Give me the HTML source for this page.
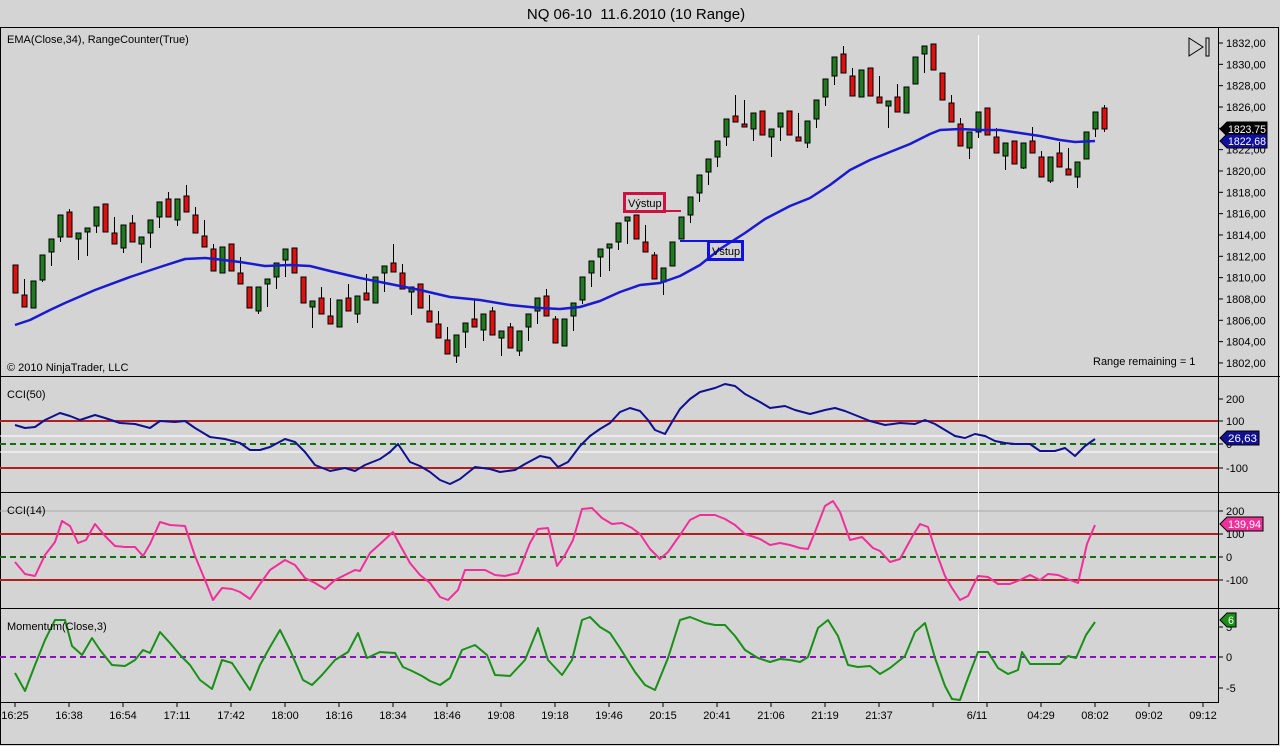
<!DOCTYPE html>
<html><head><meta charset="utf-8"><style>
body{margin:0;background:#d4d4d4;width:1280px;height:746px;overflow:hidden;font-family:"Liberation Sans",Arial,sans-serif}
svg{display:block}
</style></head><body>
<svg id="s" width="1280" height="746" xmlns="http://www.w3.org/2000/svg" font-family="Liberation Sans, Arial, sans-serif">
<rect width="1280" height="746" fill="#d4d4d4"/>
<text x="636" y="19" font-size="15" text-anchor="middle" fill="#000" style="white-space:pre">NQ 06-10&#160; 11.6.2010 (10 Range)</text>
<rect x="0.5" y="27.5" width="1278" height="717" fill="none" stroke="#000"/>
<line x1="0" y1="376.5" x2="1280" y2="376.5" stroke="#000"/>
<line x1="0" y1="492.5" x2="1280" y2="492.5" stroke="#000"/>
<line x1="0" y1="608.5" x2="1280" y2="608.5" stroke="#000"/>
<line x1="1218.5" y1="27" x2="1218.5" y2="702" stroke="#000"/>
<line x1="0" y1="702.5" x2="1219" y2="702.5" stroke="#000"/>
<line x1="978.5" y1="35" x2="978.5" y2="702" stroke="#fff"/>
<g id="g"></g>
<text x="7" y="43" font-size="11">EMA(Close,34), RangeCounter(True)</text>
<text x="7" y="371" font-size="11">© 2010 NinjaTrader, LLC</text>
<text x="1093" y="365" font-size="11">Range remaining = 1</text>
<text x="7" y="398" font-size="11">CCI(50)</text>
<text x="7" y="514" font-size="11">CCI(14)</text>
<text x="7" y="630" font-size="11">Momentum(Close,3)</text>
<path d="M1189 38 L1203 47 L1189 56 Z" fill="none" stroke="#000"/>
<rect x="1206" y="38" width="3" height="18" fill="none" stroke="#000"/>
</svg>
<script>
const g=document.getElementById('g');let h='';
h+='<line x1="0" y1="421" x2="1218" y2="421" stroke="#b02020" stroke-width="2"/><line x1="0" y1="468" x2="1218" y2="468" stroke="#b02020" stroke-width="2"/>';
h+='<line x1="0" y1="436" x2="1218" y2="436" stroke="#fff"/><line x1="0" y1="452" x2="1218" y2="452" stroke="#fff"/>';
h+='<line x1="0" y1="444" x2="1218" y2="444" stroke="#107010" stroke-width="2" stroke-dasharray="6,4"/>';
h+='<line x1="0" y1="511" x2="1218" y2="511" stroke="#a8a8a8"/>';
h+='<line x1="0" y1="534" x2="1218" y2="534" stroke="#b02020" stroke-width="2"/><line x1="0" y1="580" x2="1218" y2="580" stroke="#b02020" stroke-width="2"/>';
h+='<line x1="0" y1="557" x2="1218" y2="557" stroke="#107010" stroke-width="2" stroke-dasharray="6,4"/>';
h+='<line x1="0" y1="657" x2="1218" y2="657" stroke="#8a10c0" stroke-width="2" stroke-dasharray="6,4"/>';
for(let i=0;i<16;i++){const p=1832-2*i,y=43+i*21.33;h+=`<line x1="1218" y1="${y}" x2="1223" y2="${y}" stroke="#000"/><text x="1226" y="${y+4}" font-size="11">${p},00</text>`;}
[[399,'200'],[421,'100'],[444,'0'],[468,'-100'],[511,'200'],[534,'100'],[557,'0'],[580,'-100'],[627,'5'],[657,'0'],[688,'-5']].forEach(([y,t])=>{h+=`<line x1="1218" y1="${y}" x2="1223" y2="${y}" stroke="#000"/><text x="1226" y="${y+4}" font-size="11">${t}</text>`;});
const tl=['16:25','16:38','16:54','17:11','17:42','18:00','18:16','18:34','18:46','19:08','19:18','19:46','20:15','20:41','21:06','21:19','21:37','','6/11','04:29','08:02','09:02','09:12'];
tl.forEach((t,i)=>{const x=15+54*i;h+=`<line x1="${x}" y1="702" x2="${x}" y2="707" stroke="#000"/>`;if(t)h+=`<text x="${i==18?977:x}" y="719" font-size="11" text-anchor="middle">${t}</text>`;});
const C=[[265,293,265,293,'r'],[295,307,279,307,'r'],[281,308,281,308,'g'],[255,280,255,282,'g'],[239,252,239,266,'g'],[215,237,215,242,'g'],[212,237,209,237,'r'],[233,239,233,260,'g'],[228,232,228,256,'g'],[207,226,207,233,'g'],[204,232,204,232,'r'],[233,244,217,244,'r'],[225,248,225,253,'g'],[223,242,215,242,'r'],[237,244,237,263,'g'],[220,233,220,248,'g'],[202,217,202,228,'g'],[199,217,192,217,'r'],[199,220,199,226,'g'],[196,212,185,212,'r'],[215,233,207,233,'r'],[236,247,220,247,'r'],[249,271,244,271,'r'],[247,273,247,273,'g'],[244,271,244,271,'r'],[273,284,257,284,'r'],[287,308,287,308,'r'],[287,311,287,314,'g'],[279,284,279,307,'g'],[263,277,263,289,'g'],[249,260,249,277,'g'],[248,273,248,273,'r'],[277,303,277,303,'r'],[301,307,301,328,'g'],[298,314,287,314,'r'],[316,324,298,324,'r'],[300,327,300,327,'g'],[298,311,284,311,'r'],[296,314,296,323,'g'],[293,300,274,300,'r'],[277,303,277,303,'g'],[266,273,266,292,'g'],[263,272,244,272,'r'],[273,289,264,289,'r'],[287,292,287,315,'g'],[284,308,284,308,'r'],[311,322,295,322,'r'],[324,338,311,338,'r'],[340,354,327,354,'r'],[335,356,335,363,'g'],[323,332,323,348,'g'],[319,327,300,327,'r'],[314,330,314,341,'g'],[311,335,307,335,'r'],[331,338,331,356,'g'],[327,348,323,348,'r'],[331,351,331,356,'g'],[314,327,314,341,'g'],[298,311,298,324,'g'],[296,316,289,316,'r'],[319,343,316,343,'r'],[319,346,319,346,'g'],[303,316,303,331,'g'],[277,300,277,304,'g'],[261,273,261,287,'g'],[249,257,249,277,'g'],[244,248,244,271,'g'],[223,242,223,250,'g'],[217,221,217,244,'g'],[215,239,215,239,'r'],[242,252,225,252,'r'],[255,279,252,279,'r'],[268,282,268,295,'g'],[242,266,242,266,'g'],[217,239,217,239,'g'],[197,215,197,223,'g'],[175,193,175,202,'g'],[159,172,159,185,'g'],[141,157,141,167,'g'],[119,137,119,146,'g'],[116,122,95,122,'r'],[124,127,100,127,'r'],[113,129,113,141,'g'],[111,135,111,135,'r'],[129,137,129,157,'g'],[113,127,113,141,'g'],[111,135,111,135,'r'],[137,141,113,141,'r'],[121,143,121,148,'g'],[100,119,100,128,'g'],[79,97,79,106,'g'],[57,76,57,85,'g'],[54,73,46,73,'r'],[76,96,68,96,'r'],[70,97,70,97,'g'],[68,96,68,96,'r'],[97,103,76,103,'r'],[101,106,101,128,'g'],[97,112,84,112,'r'],[87,113,87,113,'g'],[57,84,57,84,'g'],[46,54,46,73,'g'],[44,70,44,70,'r'],[73,100,73,100,'r'],[103,122,95,122,'r'],[124,146,118,146,'r'],[132,148,132,159,'g'],[112,132,112,138,'g'],[108,135,108,135,'r'],[137,153,128,153,'r'],[143,156,143,170,'g'],[141,164,141,164,'r'],[143,168,143,169,'g'],[141,153,127,153,'r'],[157,177,151,177,'r'],[157,181,157,183,'g'],[153,167,142,167,'r'],[169,175,148,175,'r'],[162,177,162,188,'g'],[132,159,132,159,'g'],[112,129,112,137,'g'],[108,129,105,132,'r']];
C.forEach((c,i)=>{const x=15+9*i;const f=c[4]=='r'?'#e01010':'#207a20';h+=`<line x1="${x+.5}" y1="${c[2]}" x2="${x+.5}" y2="${c[3]}" stroke="#000"/><rect x="${x-2}" y="${c[0]}" width="5" height="${Math.max(2,c[1]-c[0])}" fill="${f}" stroke="#000"/>`;});
function pl(s,col,w){return `<polyline fill="none" stroke="${col}" stroke-width="${w}" stroke-linejoin="round" points="${s}"/>`;}
h+=pl('15,325 30,320 50,310 65,303 95,290 130,277 160,267 185,259 205,258 215,259 240,262 265,266 290,265 310,266 330,271 360,278 390,284 420,290 450,297 480,300 510,305 540,308 560,309 580,307 600,301 620,292 640,285 660,283 680,276 700,265 720,249 745,233 765,219 790,206 810,198 830,185 850,170 870,160 890,152 910,144 930,134 940,130 960,129 980,130 1000,130 1020,133 1040,136 1060,140 1075,142 1095,141','#1a1ad0',2.5);
h+='<line x1="665" y1="211" x2="681" y2="211" stroke="#d01040" stroke-width="2"/><rect x="624.5" y="193.5" width="40" height="18" fill="none" stroke="#d01040" stroke-width="3"/><text x="628" y="207" font-size="11">Výstup</text>';
h+='<line x1="680" y1="241" x2="708" y2="241" stroke="#1010e0" stroke-width="2"/><rect x="708.5" y="241.5" width="34" height="18" fill="none" stroke="#1010e0" stroke-width="3"/><text x="712" y="255" font-size="11">Vstup</text>';
h+=pl('15,425 25,428 35,427 45,420 60,413 70,416 80,420 95,415 105,418 120,423 135,424 150,428 160,421 175,422 185,421 195,428 210,437 225,439 240,443 250,450 260,450 270,447 285,439 295,442 305,452 315,465 330,471 345,468 355,471 365,465 380,459 390,452 398,444 410,462 420,466 430,472 440,480 450,484 460,479 475,467 490,469 500,472 515,470 525,464 540,456 550,458 558,467 568,462 580,446 590,436 600,429 610,423 620,412 630,408 640,411 648,420 655,430 665,434 672,422 680,409 690,399 700,392 715,388 725,384 735,386 745,394 760,402 770,408 785,406 795,410 810,414 825,410 835,408 845,411 855,415 870,421 885,425 900,423 915,424 925,420 935,424 945,430 955,436 965,438 975,434 985,436 995,441 1005,443 1015,444 1030,444 1040,451 1055,451 1065,448 1075,456 1085,446 1095,439','#101090',2);
h+=pl('15,562 25,574 35,576 45,555 55,542 62,521 70,526 78,543 86,540 95,524 105,536 115,546 125,547 135,547 143,556 150,544 160,522 170,525 185,526 195,556 205,580 213,600 222,588 232,589 240,592 250,599 260,584 270,570 285,560 295,565 305,578 315,583 325,589 335,580 345,575 355,570 360,571 370,553 380,544 393,532 400,545 410,563 420,575 430,583 440,597 448,600 458,590 465,570 475,570 485,570 495,575 505,576 518,573 530,543 538,529 548,528 557,566 565,555 573,540 582,509 592,508 602,518 612,524 622,523 632,528 640,534 650,549 660,559 668,552 680,535 690,520 700,515 715,515 725,519 735,525 745,534 760,539 770,545 780,543 790,545 800,548 808,549 815,532 825,506 833,501 840,512 850,540 862,537 873,548 880,551 890,562 900,559 912,537 920,524 928,527 935,549 945,576 952,588 960,600 968,596 978,576 988,577 998,584 1010,584 1020,580 1030,575 1040,580 1048,574 1058,575 1070,580 1078,583 1087,544 1095,525','#f0309a',2);
h+=pl('15,673 25,691 35,665 45,640 55,620 65,620 72,646 82,655 92,638 100,650 112,665 125,666 135,660 143,650 150,653 160,632 170,643 180,655 190,665 200,680 212,689 222,660 232,663 240,675 250,690 260,665 270,647 280,630 290,650 303,680 312,685 322,675 335,660 348,652 358,633 367,658 380,652 395,653 403,667 412,671 422,676 430,681 440,685 450,678 462,650 475,645 487,655 495,675 510,676 525,660 538,628 548,660 562,675 572,660 582,620 590,617 600,627 610,633 620,648 635,672 645,685 655,690 668,658 680,620 690,617 705,623 715,625 725,625 735,636 745,650 758,658 770,662 780,659 790,660 800,662 808,657 818,628 828,620 838,636 848,665 858,667 870,666 880,674 890,668 905,656 915,632 925,623 935,658 945,686 952,699 960,700 968,678 978,652 988,652 998,668 1008,674 1018,670 1022,652 1030,664 1045,664 1060,664 1068,656 1076,658 1086,635 1095,622','#189018',2);
function tag(y,w,bg,fg,t,tl){return `<path d="M1220 ${y} L1227 ${y-7} L${1227+w} ${y-7} L${1227+w} ${y+7} L1227 ${y+7} Z" fill="${bg}" stroke="#000"/><text x="1228" y="${y+4}" font-size="11" fill="${fg}" textLength="${tl}" lengthAdjust="spacingAndGlyphs">${t}</text>`;}
h+=tag(129,40,'#000','#fff','1823,75',38);
h+=tag(141,40,'#1010a0','#fff','1822,68',38);
h+=tag(438,32,'#101090','#fff','26,63',29);
h+=tag(524,36,'#f0309a','#fff','139,94',33);
h+=tag(620,9,'#189018','#fff','6',6);
g.innerHTML=h;
</script>
</body></html>
